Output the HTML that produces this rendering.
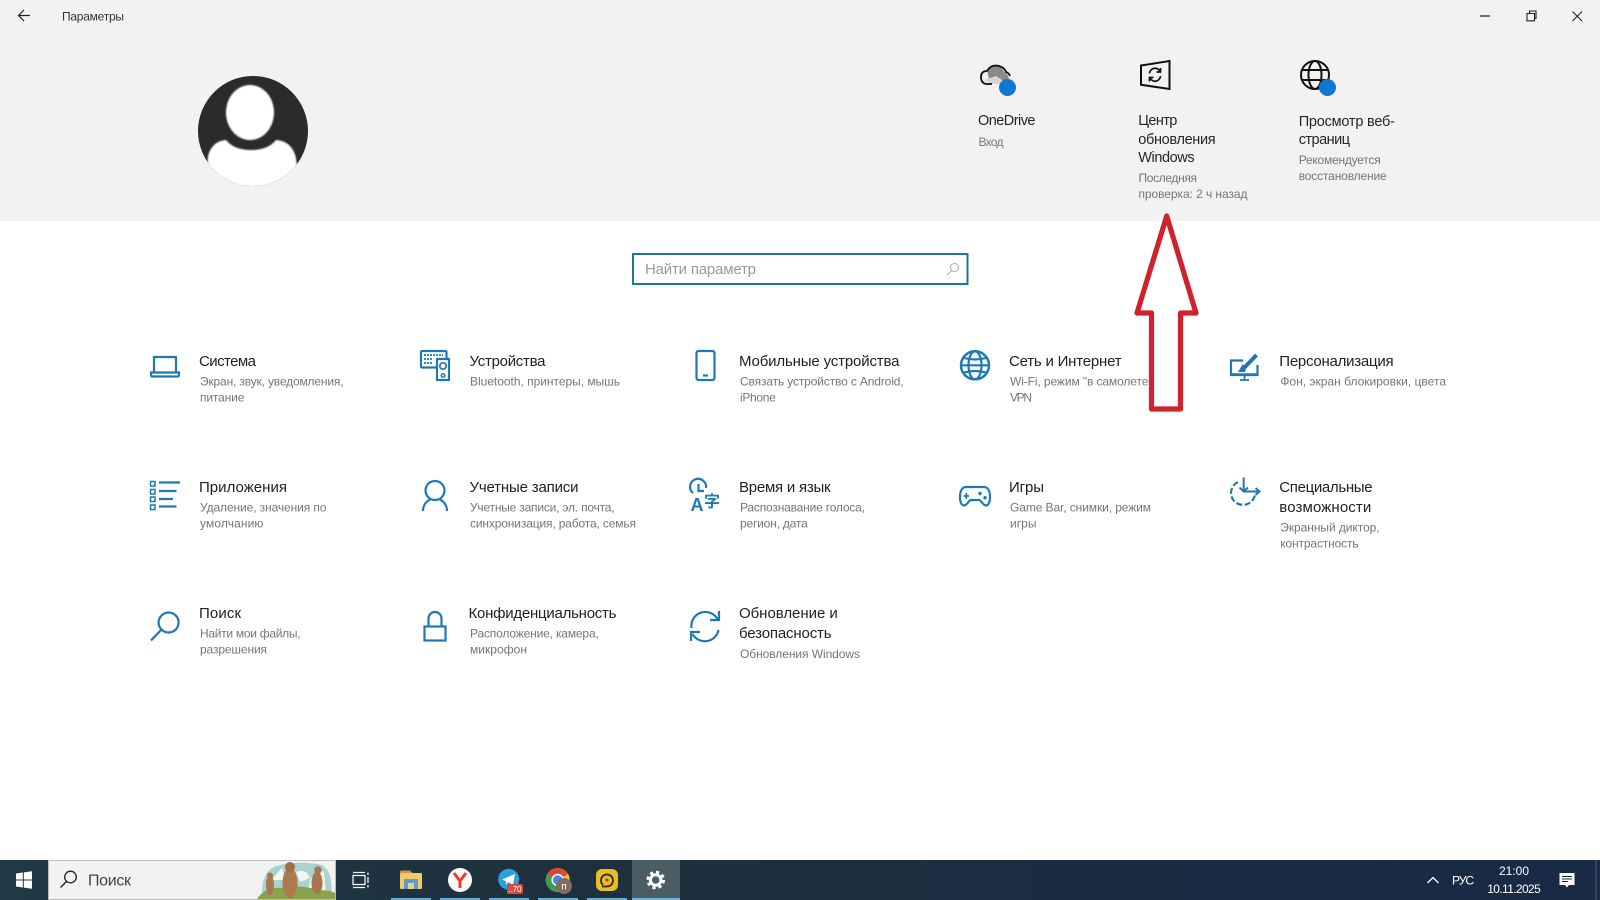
<!DOCTYPE html>
<html lang="ru"><head><meta charset="utf-8"><title>Параметры</title>
<style>
html,body{margin:0;padding:0;width:1600px;height:900px;overflow:hidden;background:#fff}
svg{display:block;filter:blur(.3px)}
text{font-family:"Liberation Sans","Noto Sans CJK SC",sans-serif}
.t{font-size:15px;fill:#222}
.s{font-size:12px;fill:#767676}
.h{font-size:14.5px;fill:#262626}
.i{fill:none;stroke:#1f78b4;stroke-width:2.2}
.k{fill:none;stroke:#111;stroke-width:2}
.w{fill:none;stroke:#fff}
</style></head><body>
<svg width="1600" height="900" viewBox="0 0 1600 900" xmlns="http://www.w3.org/2000/svg">
<defs>
<linearGradient id="tb" x1="0" x2="1" y1="0" y2="0"><stop offset="0" stop-color="#1f3947"/><stop offset=".42" stop-color="#1d2f3b"/><stop offset=".8" stop-color="#1a2b44"/><stop offset="1" stop-color="#182a46"/></linearGradient>
<clipPath id="av"><circle cx="253" cy="131" r="55"/></clipPath>
<filter id="bl"><feGaussianBlur stdDeviation=".7"/></filter>
</defs>
<rect width="1600" height="221" fill="#f2f2f2"/>

<!-- title bar -->
<path d="M30 15.5H18.5M24 10L18.5 15.5L24 21" fill="none" stroke="#222" stroke-width="1.2"/>
<text x="62" y="20.7" font-size="12" fill="#333" textLength="62">Параметры</text>
<path d="M1480 16H1490" stroke="#222" stroke-width="1.2"/>
<path d="M1527 13.5H1534.5V20.8H1527ZM1529.5 13.3V11H1536V18.5H1534.5" fill="none" stroke="#222" stroke-width="1.1"/>
<path d="M1572.5 11.5L1582 21M1582 11.5L1572.5 21" stroke="#222" stroke-width="1.1"/>

<!-- avatar -->
<circle cx="253" cy="131" r="55" fill="#2b2b2b"/>
<g clip-path="url(#av)" filter="url(#bl)">
<ellipse cx="250" cy="112.5" rx="24" ry="27.5" fill="#fff"/>
<path d="M206 195L208 156Q212 141 226 140Q234 150 251 150Q268 150 276 140Q292 141 296 158L300 195Z" fill="#fff"/>
</g>

<!-- hero: onedrive -->
<path d="M987 70A9 7 0 0 1 1004 72Q1009 74 1009 81L1004 84H990Z" fill="#8a8a8a"/>
<path d="M984 80L996 76L1008 84H990Z" fill="#d6d6d6"/>
<path d="M992 84H986Q981 83 981 77Q981 71 987 71Q991 64 999 66Q1005 68 1006 72Q1009 73 1010 76" fill="none" stroke="#111" stroke-width="1.8"/>
<circle cx="1007.5" cy="87.5" r="8.5" fill="#0f78d4"/>
<text x="978" y="125" class="h" textLength="57.5">OneDrive</text>
<text x="978.5" y="146" class="s" textLength="25">Вход</text>

<!-- hero: update -->
<path d="M1141 65.5L1169.5 61V89L1141 84.8Z" class="k"/>
<path d="M1149.5 73.5A5.5 5.5 0 0 1 1160 71.5M1160.5 68V72H1156.5M1160.5 76A5.5 5.5 0 0 1 1150 78M1149.5 81.5V77.5H1153.5" fill="none" stroke="#111" stroke-width="1.7"/>
<text x="1138.3" y="125" class="h" textLength="39">Центр</text>
<text x="1138.3" y="144" class="h" textLength="77.3">обновления</text>
<text x="1138.3" y="162" class="h" textLength="56.3">Windows</text>
<text x="1138.5" y="182" class="s" textLength="58.5">Последняя</text>
<text x="1138.5" y="198" class="s" textLength="109">проверка: 2 ч назад</text>

<!-- hero: globe -->
<circle cx="1315" cy="75" r="14" class="k"/>
<ellipse cx="1315" cy="75" rx="6.5" ry="14" class="k"/>
<path d="M1302.5 70H1327.5M1302.5 80H1327.5" class="k"/>
<circle cx="1327.5" cy="87.5" r="8.5" fill="#0f78d4"/>
<text x="1298.7" y="126" class="h" textLength="96.3">Просмотр веб-</text>
<text x="1298.7" y="144" class="h" textLength="51.3">страниц</text>
<text x="1298.7" y="164" class="s" textLength="82">Рекомендуется</text>
<text x="1298.7" y="180" class="s" textLength="88">восстановление</text>

<!-- search -->
<rect x="633" y="254" width="334.5" height="30" fill="#fff" stroke="#1d75a1" stroke-width="2"/>
<text x="645" y="274" font-size="15" fill="#999" textLength="111">Найти параметр</text>
<circle cx="954.5" cy="267.5" r="4" fill="none" stroke="#aaa" stroke-width="1"/>
<path d="M951.5 270.5L947 275" stroke="#aaa" stroke-width="1"/>

<!-- col 1 -->
<path d="M154 372V357H176V372" class="i"/><path d="M151 372.5H179V375Q179 376.5 177.5 376.5H152.5Q151 376.5 151 375Z" class="i"/>
<text x="199" y="366" class="t" textLength="57">Система</text>
<text x="200" y="385.5" class="s" textLength="143.6">Экран, звук, уведомления,</text>
<text x="200" y="401.5" class="s" textLength="44.4">питание</text>

<rect x="150.5" y="481.5" width="4.5" height="4.5" class="i" style="stroke-width:1.5"/><rect x="150.5" y="489.5" width="4.5" height="4.5" class="i" style="stroke-width:1.5"/><rect x="150.5" y="497" width="4.5" height="4.5" class="i" style="stroke-width:1.5"/><rect x="150.5" y="505" width="4.5" height="4.5" class="i" style="stroke-width:1.5"/>
<path d="M159 482.5H180M159 491H176.5M159 499H173M159 506.5H176.5" class="i"/>
<text x="199" y="492" class="t" textLength="88">Приложения</text>
<text x="200" y="511.5" class="s" textLength="126.4">Удаление, значения по</text>
<text x="200" y="527.5" class="s" textLength="63.4">умолчанию</text>

<circle cx="168.6" cy="622.5" r="10" class="i"/><path d="M161.5 629.5L151 640.5" class="i"/>
<text x="199" y="618" class="t" textLength="42">Поиск</text>
<text x="200" y="637.5" class="s" textLength="100.6">Найти мои файлы,</text>
<text x="200" y="653.5" class="s" textLength="67">разрешения</text>

<!-- col 2 -->
<path d="M436 367.5H422Q421 367.5 421 366V352.5Q421 351 422.5 351H445Q446.5 351 446.5 352.5V358" class="i"/>
<path d="M424 355H443M424 359H433M424 363H433" fill="none" stroke="#1f78b4" stroke-width="1.7" stroke-dasharray="2 1"/>
<rect x="437" y="359" width="12" height="21" class="i"/><circle cx="443" cy="366" r="3.2" class="i" style="stroke-width:1.7"/><circle cx="443" cy="375.5" r="1.8" class="i" style="stroke-width:1.5"/>
<text x="469.5" y="366" class="t" textLength="76">Устройства</text>
<text x="470" y="385.5" class="s" textLength="150">Bluetooth, принтеры, мышь</text>

<circle cx="435" cy="490.5" r="9.5" class="i"/><path d="M423 511A12.5 12.5 0 0 1 430 499.5M447 511A12.5 12.5 0 0 0 440 499.5" class="i"/>
<text x="469.5" y="492" class="t" textLength="109">Учетные записи</text>
<text x="470" y="511.5" class="s" textLength="144.6">Учетные записи, эл. почта,</text>
<text x="470" y="527.5" class="s" textLength="166">синхронизация, работа, семья</text>

<rect x="424.5" y="626.5" width="21" height="14" class="i"/><path d="M428.5 626V618.5A6.5 6.5 0 0 1 441.5 618.5V626" class="i"/>
<text x="468.5" y="618" class="t" textLength="148">Конфиденциальность</text>
<text x="470" y="637.5" class="s" textLength="128.8">Расположение, камера,</text>
<text x="470" y="653.5" class="s" textLength="57">микрофон</text>

<!-- col 3 -->
<rect x="696.5" y="351" width="18" height="29" rx="2" class="i"/><path d="M703 375.5H708" class="i"/>
<text x="739" y="366" class="t" textLength="160.5">Мобильные устройства</text>
<text x="740" y="385.5" class="s" textLength="163.6">Связать устройство с Android,</text>
<text x="740" y="401.5" class="s" textLength="35.8">iPhone</text>

<path d="M693 493A8 8 0 1 1 706 488" class="i"/><path d="M698.5 484V491H704" class="i"/>
<text x="690.5" y="511" font-size="18" font-weight="bold" fill="#1f78b4">A</text>
<text x="704" y="507" font-size="16" font-weight="bold" fill="#1f78b4">字</text>
<text x="739" y="492" class="t" textLength="91.6">Время и язык</text>
<text x="740" y="511.5" class="s" textLength="125">Распознавание голоса,</text>
<text x="740" y="527.5" class="s" textLength="67.8">регион, дата</text>

<path d="M691.5 628A14 14 0 0 1 717.5 619" class="i"/><path d="M719 611V620H710" class="i"/>
<path d="M718.5 630A14 14 0 0 1 692.5 634" class="i"/><path d="M691 641V632H700" class="i"/>
<text x="739" y="618" class="t" textLength="98.8">Обновление и</text>
<text x="739" y="638" class="t" textLength="92.6">безопасность</text>
<text x="740" y="658" class="s" textLength="120">Обновления Windows</text>

<!-- col 4 -->
<circle cx="975" cy="365.3" r="14" class="i" style="stroke-width:2.5"/><ellipse cx="975" cy="365.3" rx="6.5" ry="14" class="i"/>
<path d="M964 358Q975 361 986 358M964 372.5Q975 369.5 986 372.5M961 365.3H989" class="i"/>
<text x="1009" y="366" class="t" textLength="112.6">Сеть и Интернет</text>
<text x="1010" y="385.5" class="s" textLength="138.4">Wi-Fi, режим "в самолете</text>
<text x="1010" y="401.5" class="s" textLength="22">VPN</text>

<path d="M966 487H984C988 487 990 491 990 497C990 503 988 505.5 986 505.5C983 505.5 981 500 979 500H971C969 500 967 505.5 964 505.5C962 505.5 960 503 960 497C960 491 962 487 966 487Z" class="i"/>
<path d="M963.5 496H969M966.3 493V499" class="i" style="stroke-width:1.7"/><circle cx="980" cy="493.5" r="1.7" fill="#1f78b4"/><circle cx="985" cy="497.7" r="1.7" fill="#1f78b4"/>
<text x="1009" y="492" class="t" textLength="35">Игры</text>
<text x="1010" y="511.5" class="s" textLength="141">Game Bar, снимки, режим</text>
<text x="1010" y="527.5" class="s" textLength="26.5">игры</text>

<!-- col 5 -->
<path d="M1243 360.5H1231V375H1257.5V365" class="i"/><path d="M1231 374.5H1257.5" class="i" style="stroke-width:2.5"/>
<path d="M1244.5 375V380M1240 380H1249" class="i" style="stroke-width:1.8"/>
<path d="M1256.5 355L1244 368" fill="none" stroke="#1f78b4" stroke-width="4"/><path d="M1238 372H1245L1246.5 367L1242.5 364.5Z" fill="#1f78b4"/>
<text x="1279.3" y="366" class="t" textLength="114.3">Персонализация</text>
<text x="1280.3" y="385.5" class="s" textLength="165.7">Фон, экран блокировки, цвета</text>

<path d="M1238 482A12 12 0 1 0 1255 493" fill="none" stroke="#1f78b4" stroke-width="2.2" stroke-dasharray="6 2.5"/>
<path d="M1243.7 477.5V491.5M1239.5 487.5L1243.7 491.5L1248 487.5M1244 491.5H1259M1255.5 488L1259.5 491.5L1255.5 495" class="i" style="stroke-width:2"/>
<text x="1279.3" y="492" class="t" textLength="93.3">Специальные</text>
<text x="1279.3" y="512" class="t" textLength="92">возможности</text>
<text x="1280.3" y="531.5" class="s" textLength="99.3">Экранный диктор,</text>
<text x="1280.3" y="547.5" class="s" textLength="78.3">контрастность</text>

<!-- arrow -->
<path d="M1166.7 216L1137 313H1151.5V409H1180.5V313H1196L1166.7 216Z" fill="#fff" stroke="#d0222e" stroke-width="5.2" stroke-linejoin="round"/>

<!-- taskbar -->
<rect y="860" width="1600" height="40" fill="url(#tb)"/>
<path d="M16 873.5L22.8 872.5V879.5H16ZM23.8 872.4L32 871.3V879.5H23.8ZM16 880.5H22.8V887.5L16 886.5ZM23.8 880.5H32V888.7L23.8 887.6Z" fill="#fff"/>
<rect x="48.5" y="860.5" width="287" height="39" fill="#f2f2f2" stroke="#bdbdbd"/>
<circle cx="70.5" cy="877" r="5.8" fill="none" stroke="#222" stroke-width="1.3"/><path d="M66.5 881.5L60.5 887.5" stroke="#222" stroke-width="1.3"/>
<text x="88" y="885.5" font-size="16" fill="#444" textLength="43">Поиск</text>

<!-- search art -->
<path d="M262 899Q260 872 276 866Q300 860 322 865Q334 872 331 899Z" fill="#a9d3cf"/>
<path d="M296 872Q306 868 310 878L300 882ZM282 868Q276 874 272 880L286 880Z" fill="#f6f6f0"/>
<path d="M310 880Q318 866 324 872L326 892H308Z" fill="#f3f2ea"/>
<path d="M257 899Q266 886 280 888Q300 884 318 890Q330 890 335 893V899Z" fill="#8ba24d"/>
<ellipse cx="270" cy="885" rx="4" ry="10" fill="#a9774f"/><circle cx="270" cy="875.5" r="3" fill="#a9774f"/>
<ellipse cx="290" cy="883" rx="7.5" ry="15" fill="#ad7a50"/><ellipse cx="290" cy="867" rx="5" ry="5" fill="#a06d45"/>
<ellipse cx="317" cy="883" rx="5.5" ry="11.5" fill="#a9774f"/><circle cx="318" cy="870" r="3.8" fill="#a9774f"/>

<!-- task view -->
<path d="M353 875.5H365V884.5H353ZM353 872.5H365M353 887.5H365M368 872.5V875M368 877V883M368 885V887.5" class="w" stroke-width="1.2"/>

<!-- explorer -->
<path d="M400 872Q400 870.5 401.5 870.5H410L412.5 873H400Z" fill="#c9973a"/>
<rect x="400" y="873" width="22" height="16" rx="1" fill="#f1c968"/>
<rect x="404" y="879" width="14" height="10" fill="#5c9ccc"/><rect x="408" y="883" width="6" height="6" fill="#e9d28a"/>
<!-- yandex -->
<circle cx="460" cy="880" r="12" fill="#fff"/><path d="M454 873L460 881V888M466 873L460 881" fill="none" stroke="#ee3b32" stroke-width="3"/>
<!-- telegram -->
<circle cx="508.7" cy="879.3" r="10.5" fill="#2d9fdc"/><path d="M502 879.5L515 874L513 885L508.5 882L506 884.5L505.8 881Z" fill="#fff"/>
<rect x="507" y="884" width="16" height="10" rx="2" fill="#dc4a46"/><text x="508.5" y="892" font-size="8" fill="#fff" textLength="13">..70</text>
<!-- chrome -->
<circle cx="557.7" cy="880" r="12" fill="#f1c232"/>
<path d="M557.7 880L547.3 874A12 12 0 0 1 568 874Z" fill="#d8473b"/>
<path d="M557.7 880L547.3 874A12 12 0 0 0 551.7 890.4Z" fill="#3f9c50"/>
<path d="M557.7 880L551.7 890.4A12 12 0 0 0 557.7 892Z" fill="#3f9c50"/>
<circle cx="557.7" cy="880" r="5.5" fill="#4a87e0" stroke="#fff" stroke-width="1.5"/>
<circle cx="564" cy="886" r="8" fill="#7e6c63"/><text x="564" y="889.5" font-size="10" fill="#fff" text-anchor="middle">п</text>
<!-- ldplayer -->
<rect x="596" y="869" width="22" height="22" rx="6" fill="#e9bd24"/>
<path d="M603 885A6 6 0 1 1 607 886.5H602" fill="none" stroke="#2f2a14" stroke-width="1.8"/><circle cx="607" cy="880" r="1.5" fill="#c23"/>
<!-- settings active -->
<rect x="632" y="860" width="48" height="40" fill="#4b5c64"/>
<circle cx="655.7" cy="880" r="5.3" fill="none" stroke="#fff" stroke-width="3"/>
<circle cx="655.7" cy="880" r="8" fill="none" stroke="#fff" stroke-width="2.6" stroke-dasharray="3.3 3"/>

<g fill="#6fadd9">
<rect x="391" y="898" width="40" height="2"/><rect x="440" y="898" width="40" height="2"/><rect x="489" y="898" width="40" height="2"/><rect x="538" y="898" width="40" height="2"/><rect x="587" y="898" width="40" height="2"/><rect x="632" y="898" width="48" height="2"/>
</g>

<!-- tray -->
<path d="M1427.5 883L1433 877.5L1438.5 883" class="w" stroke-width="1.3"/>
<text x="1452" y="884.5" font-size="12" fill="#fff" textLength="22">РУС</text>
<text x="1514" y="875" font-size="12" fill="#fff" text-anchor="middle" textLength="30">21:00</text>
<text x="1514" y="893" font-size="12" fill="#fff" text-anchor="middle" textLength="53.5">10.11.2025</text>
<path d="M1559.5 873H1574.5V885H1569L1567 887.5L1565 885H1559.5Z" fill="#fff"/>
<path d="M1562 876.5H1572M1562 879H1572M1562 881.5H1568" stroke="#1a2b44" stroke-width="1"/>
<rect x="1595.5" y="860" width="1" height="40" fill="#4a5a70"/>
</svg>
</body></html>
